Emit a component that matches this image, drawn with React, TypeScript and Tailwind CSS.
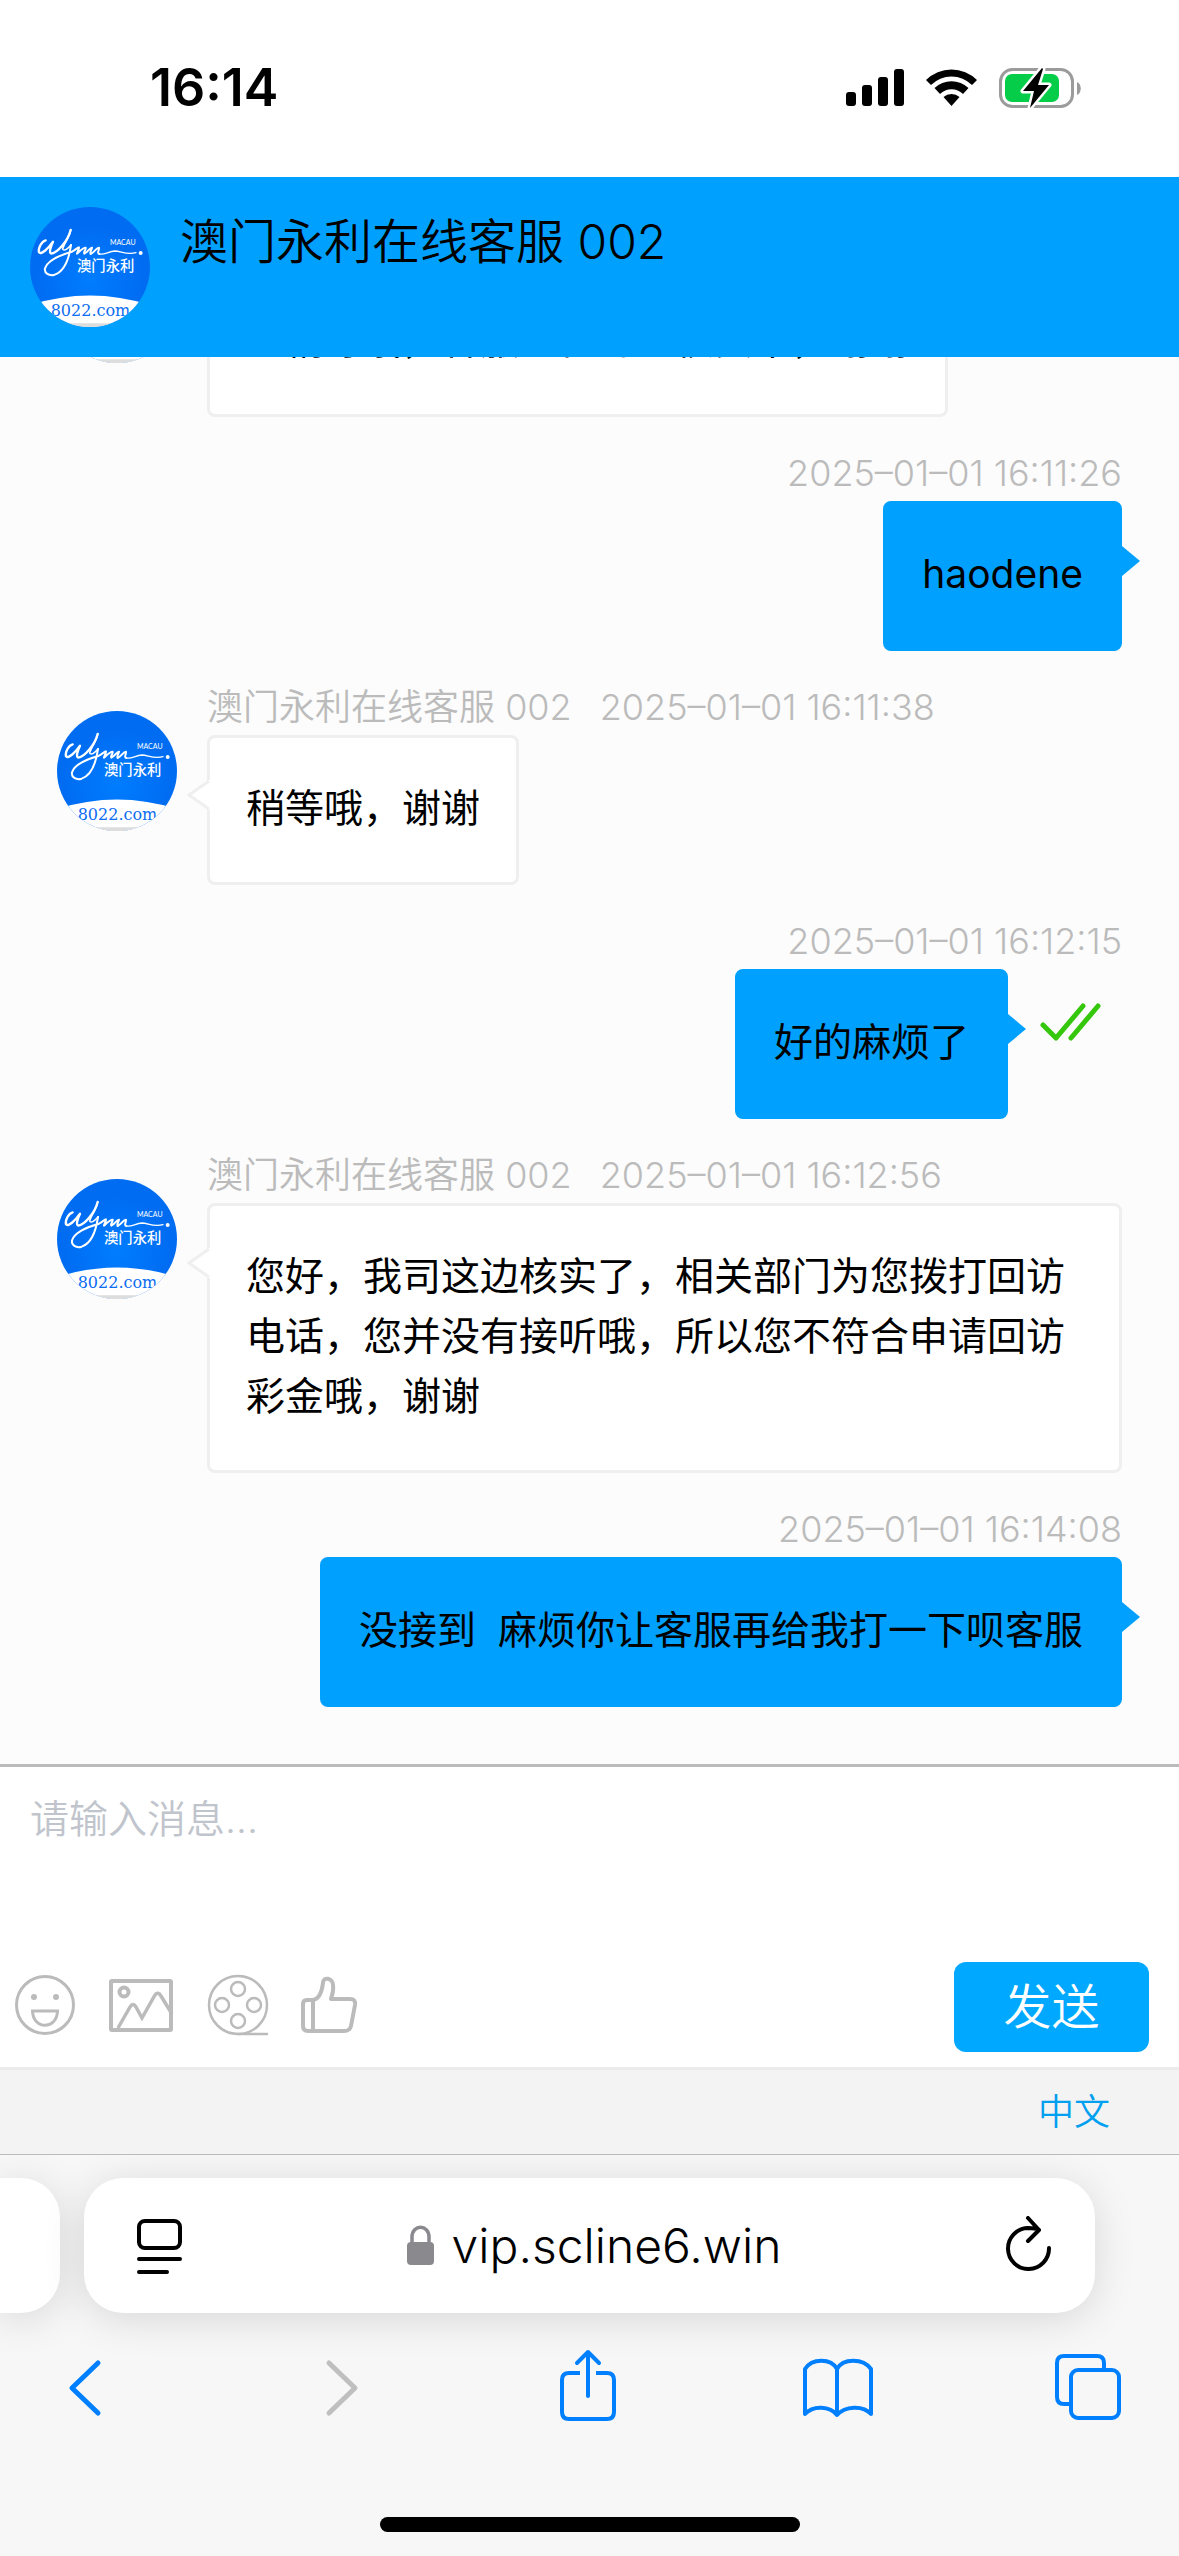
import { useState } from "react";

type Message = {
  id: number;
  from: "agent" | "me";
  text: string;
  time?: string;
  read?: boolean;
};

const AGENT = "澳门永利在线客服 002";

const messages: Message[] = [
  { id: 1, from: "agent", text: "您稍等哦，客服正在为您核实中，谢谢" },
  { id: 2, from: "me", text: "haodene", time: "2025–01–01 16:11:26" },
  { id: 3, from: "agent", text: "稍等哦，谢谢", time: "2025–01–01 16:11:38" },
  { id: 4, from: "me", text: "好的麻烦了", time: "2025–01–01 16:12:15", read: true },
  {
    id: 5,
    from: "agent",
    text: "您好，我司这边核实了，相关部门为您拨打回访电话，您并没有接听哦，所以您不符合申请回访彩金哦，谢谢",
    time: "2025–01–01 16:12:56",
  },
  { id: 6, from: "me", text: "没接到  麻烦你让客服再给我打一下呗客服", time: "2025–01–01 16:14:08" },
];

function Avatar({ id }: { id: string }) {
  return (
    <svg className="w-[120px] h-[120px] shrink-0" viewBox="90 81 360 360" role="img" aria-label="Wynn Macau">
      <defs>
        <radialGradient id={`${id}-bg`} cx="0.5" cy="0.6" r="0.45">
          <stop offset="0" stopColor="#007dff" />
          <stop offset="1" stopColor="#006cf2" />
        </radialGradient>
        <clipPath id={`${id}-clip`}>
          <circle cx="270" cy="261" r="180" />
        </clipPath>
      </defs>
      <g clipPath={`url(#${id}-clip)`}>
        <rect x="90" y="81" width="360" height="360" fill={`url(#${id}-bg)`} />
        <path d="M90 375 Q270 318 450 375 V441 H90 Z" fill="#fff" />
        <path d="M190 430 H350 V441 H190 Z" fill="#ddd" />
        <g fill="none" stroke="#fff" strokeLinecap="round" strokeLinejoin="round">
          <path
            strokeWidth="7"
            d="M137 181 C124 184 114 206 117 217 C124 226 146 204 159 185 C151 202 146 219 154 221 C172 219 203 184 212 150"
          />
          <path strokeWidth="5" d="M212 150 C210 172 190 192 188 207 C192 215 204 206 213 195" />
          <path
            strokeWidth="6"
            d="M213 195 C208 230 196 273 164 284 C147 289 132 279 135 265 C142 243 180 225 216 215 C228 209 234 201 237 202 C238 207 230 218 231 221 C240 213 252 201 257 203 C258 209 249 218 253 221 C263 217 270 202 276 203 C275 210 268 218 272 222 C283 217 290 202 297 203 C298 210 290 220 298 222"
          />
          <path strokeWidth="4" d="M298 222 C314 226 326 213 345 213 C364 214 380 225 408 218" />
        </g>
        <circle cx="422" cy="219" r="6" fill="#fff" />
        <text x="330" y="195" fontSize="21" fill="#fff" className="font-['Lato']">MACAU</text>
        <text x="231" y="272" fontSize="43" fill="#fff" className="font-['Noto_Sans_CJK_SC'] font-medium">澳门永利</text>
        <text x="152" y="409" fontSize="48" fill="#0c6cf2" className="font-['DejaVu_Serif']">8022.com</text>
      </g>
    </svg>
  );
}

function StatusBar() {
  return (
    <div className="h-[177px] shrink-0 flex items-start justify-between bg-white pl-[150px] pr-[98px] pt-[56px]">
      <span className="text-[52px] leading-[64px] font-semibold">16:14</span>
      <div className="flex items-center gap-[21px] h-[64px]">
        <svg className="w-[59px] h-[40px]" viewBox="0 0 59 40">
          <rect x="0" y="24" width="10" height="14" rx="3" />
          <rect x="16" y="17" width="10" height="21" rx="3" />
          <rect x="32" y="9" width="10" height="29" rx="3" />
          <rect x="48" y="1" width="10" height="37" rx="3" />
        </svg>
        <svg className="w-[51px] h-[40px]" viewBox="0 0 51 40">
          <path d="M0 12 A36 36 0 0 1 51 12 L46 17 A29 29 0 0 0 5 17 Z" />
          <path d="M8.500 20 A24.500 24.500 0 0 1 42.500 20 L37 26 A16.500 16.500 0 0 0 14 26 Z" />
          <path d="M17.500 29 A12 12 0 0 1 33.500 29 L25.500 38 Z" />
        </svg>
        <svg className="w-[83px] h-[42px]" viewBox="0 0 83 42">
          <rect x="2.500" y="2.500" width="72" height="37" rx="12" fill="none" stroke="#9b9b9b" strokeWidth="3" />
          <rect x="7" y="7" width="54" height="28" rx="7" fill="#05cd49" />
          <path d="M79 15 C84 17 84 26 79 28 Z" fill="#9b9b9b" />
          <path
            d="M44 1 L25 24 H36 L32 41 L51 18 H40 L45 2 Z"
            stroke="#fff"
            strokeWidth="5"
            strokeLinejoin="round"
            paintOrder="stroke"
          />
        </svg>
      </div>
    </div>
  );
}

function AgentMessage({ message }: { message: Message }) {
  return (
    <li className="flex items-start gap-[30px]">
      <div className="pt-8">
        <Avatar id={`avatar-${message.id}`} />
      </div>
      <div className="min-w-0">
        <p className="flex gap-7 h-[56px] text-[36px] leading-[56px] font-[350] text-[#bbb] whitespace-nowrap">
          {message.time && (
            <>
              <span>{AGENT}</span>
              <time>{message.time}</time>
            </>
          )}
        </p>
        <div className="relative w-fit rounded-lg border-3 border-[#efefef] bg-white px-9 pt-10 pb-11 text-[39px] leading-[60px]">
          <svg className="absolute -left-[23px] top-[42px] w-[24px] h-[30px]" viewBox="0 0 24 30">
            <path d="M24 0 H22 L2 15 L22 30 H24 Z" fill="#fff" />
            <path d="M22 1 L2 15 L22 29" fill="none" stroke="#efefef" strokeWidth="3" />
          </svg>
          {message.text}
        </div>
      </div>
    </li>
  );
}

function MyMessage({ message }: { message: Message }) {
  return (
    <li className="flex flex-col items-end">
      <time className="h-[56px] text-[36px] leading-[56px] font-[350] text-[#bbb]">{message.time}</time>
      <div className="flex items-start">
        <div className="relative rounded-lg border-3 border-[#00a0ff] bg-[#00a0ff] px-9 pt-10 pb-11 text-[39px] leading-[60px] whitespace-pre-wrap">
          {message.text}
          <svg className="absolute -right-[21px] top-[42px] w-[18px] h-[30px]" viewBox="0 0 18 30">
            <path d="M0 0 L18 15 L0 30 Z" fill="#00a0ff" />
          </svg>
        </div>
        {message.read && (
          <svg className="w-[114px] h-[110px]" viewBox="0 0 114 110" role="img" aria-label="已读">
            <path
              d="M35 56 L48 69 L75 37 M63 69 L90 37"
              fill="none"
              stroke="#35c70b"
              strokeWidth="5"
              strokeLinecap="round"
              strokeLinejoin="round"
            />
          </svg>
        )}
      </div>
    </li>
  );
}

function Composer() {
  const [draft, setDraft] = useState("");

  return (
    <form
      className="shrink-0 border-t-3 border-[#bbb] bg-white"
      onSubmit={(e) => {
        e.preventDefault();
        setDraft("");
      }}
    >
      <textarea
        aria-label="消息"
        className="block w-full h-[195px] resize-none px-[30px] pt-[22px] text-[39px] leading-[60px] font-[350] outline-none placeholder:text-[#c0c4cc]"
        placeholder="请输入消息..."
        value={draft}
        onChange={(e) => setDraft(e.target.value)}
      />
      <div className="flex items-center justify-between pl-[15px] pr-[30px] pb-[15px]">
        <div className="flex items-center gap-8 pb-1">
          <button type="button" aria-label="表情">
            <svg className="w-[62px] h-[62px]" viewBox="0 0 62 62" fill="none" stroke="#bbb" strokeWidth="3">
              <circle cx="30" cy="31" r="28.500" />
              <circle cx="19" cy="23" r="3" fill="#bbb" stroke="none" />
              <circle cx="41" cy="23" r="3" fill="#bbb" stroke="none" />
              <path d="M17.500 37 H42.500 C42 56 18 56 17.500 37 Z" />
            </svg>
          </button>
          <button type="button" aria-label="图片">
            <svg className="w-[66px] h-[62px]" viewBox="0 0 66 62" fill="none" stroke="#bbb" strokeWidth="4">
              <rect x="2" y="7" width="60" height="49" rx="1" />
              <circle cx="15" cy="18" r="4.500" />
              <path d="M9 54 L21 33 Q24 28 27 33 L33 44 L46 21 Q49 17 52 22 L63 40" strokeWidth="3.500" />
            </svg>
          </button>
          <button type="button" aria-label="视频">
            <svg className="w-[62px] h-[62px]" viewBox="0 0 62 62" fill="none" stroke="#bbb" strokeWidth="2.500">
              <circle cx="31" cy="31" r="29" />
              <circle cx="31" cy="15" r="7" />
              <circle cx="31" cy="47" r="7" />
              <circle cx="15" cy="31" r="7" />
              <circle cx="47" cy="31" r="7" />
              <path d="M31 60 H60" strokeLinecap="round" />
            </svg>
          </button>
          <button type="button" aria-label="评价">
            <svg className="w-[60px] h-[62px]" viewBox="2 0 60 62" fill="none" stroke="#bbb" strokeWidth="4" strokeLinejoin="round">
              <path d="M8 26 H14 C20 25 23 17 24 9 C24 2 34 4 34 11 C35 17 33 21 32 25 H51 Q57 25 56 31 L52 52 Q51 57 45 57 H9 Q4 57 4 52 V30 Q4 26 8 26 Z" />
              <path d="M14 26 V57" />
            </svg>
          </button>
        </div>
        <button type="submit" className="w-[195px] h-[90px] rounded-xl bg-[#00a8ff] text-[48px] leading-[90px] font-[350] text-white">
          发送
        </button>
      </div>
    </form>
  );
}

function BrowserBar() {
  return (
    <footer className="shrink-0 overflow-hidden border-t border-[#bbb] bg-[#f7f7f7] pt-[23px]">
      <div className="flex gap-6">
        <div className="w-[60px] h-[135px] shrink-0 rounded-r-[39px] bg-white shadow-[0_6px_42px_rgba(0,0,0,0.13)]" />
        <div className="flex flex-1 items-center justify-between h-[135px] mr-[84px] rounded-[39px] bg-white pl-[52px] pr-[42px] shadow-[0_6px_42px_rgba(0,0,0,0.13)]">
          <button aria-label="页面设置">
            <svg className="w-[48px] h-[60px]" viewBox="0 0 48 60" fill="none" stroke="#000" strokeWidth="4" strokeLinecap="round">
              <rect x="3" y="5" width="41" height="27" rx="6" />
              <path d="M3 43 H44 M3 56 H31" />
            </svg>
          </button>
          <div className="flex items-center gap-[17px]">
            <svg className="w-[29px] h-[42px]" viewBox="0 0 29 42">
              <path d="M6 20 V12 C6 -1 23 -1 23 12 V20" fill="none" stroke="#8a898e" strokeWidth="3.500" />
              <rect x="1" y="17" width="27" height="23" rx="4" fill="#8a898e" />
            </svg>
            <span className="text-[48px] leading-[60px] font-[350]">vip.scline6.win</span>
          </div>
          <button aria-label="刷新">
            <svg
              className="w-[50px] h-[60px]"
              viewBox="0 0 50 60"
              fill="none"
              stroke="#000"
              strokeWidth="4"
              strokeLinecap="round"
              strokeLinejoin="round"
            >
              <path d="M46 32 A20.500 20.500 0 1 1 25 12 C29 12 33 12 36 14 M25 2 L36 14 L25 25" />
            </svg>
          </button>
        </div>
      </div>
      <nav className="flex items-center justify-between pl-12 pr-[54px] pt-[34px] text-[#007fff]">
        <button aria-label="后退">
          <svg className="w-[72px] h-[80px]" viewBox="0 0 72 80" fill="none" stroke="currentColor" strokeWidth="5" strokeLinecap="round" strokeLinejoin="round">
            <path d="M50 16 L24 41 L50 66" />
          </svg>
        </button>
        <button aria-label="前进" disabled>
          <svg className="w-[72px] h-[80px]" viewBox="0 0 72 80" fill="none" stroke="#bfbfc0" strokeWidth="5" strokeLinecap="round" strokeLinejoin="round">
            <path d="M30 16 L56 41 L30 66" />
          </svg>
        </button>
        <button aria-label="分享">
          <svg className="w-[72px] h-[80px]" viewBox="0 0 72 80" fill="none" stroke="currentColor" strokeWidth="4" strokeLinecap="round" strokeLinejoin="round">
            <path d="M29 26 H18 Q11 26 11 33 V65 Q11 72 18 72 H56 Q63 72 63 65 V33 Q63 26 56 26 H45" strokeLinecap="butt" />
            <path d="M37 49 V5 M26 16 L37 5 L48 16" />
          </svg>
        </button>
        <button aria-label="书签">
          <svg className="w-[72px] h-[80px]" viewBox="0 0 72 80" fill="none" stroke="currentColor" strokeWidth="4" strokeLinecap="round" strokeLinejoin="round">
            <path d="M35 68 C28 59 11 58 3 67 V22 C10 11 29 11 35 22 C41 11 61 11 69 22 V67 C61 58 43 59 35 68 Z M35 22 V67" />
          </svg>
        </button>
        <button aria-label="标签页">
          <svg className="w-[72px] h-[80px]" viewBox="0 0 72 80" fill="none" stroke="currentColor" strokeWidth="4" strokeLinejoin="round">
            <path d="M16 57 H11 Q4 57 4 50 V16 Q4 9 11 9 H44 Q51 9 51 16 V22" />
            <rect x="18" y="23" width="48" height="48" rx="7" />
          </svg>
        </button>
      </nav>
      <div className="pt-[90px] pb-6 flex justify-center">
        <div className="w-[420px] h-[15px] rounded-full bg-black" />
      </div>
    </footer>
  );
}

export default function App() {
  return (
    <div className="flex flex-col h-screen overflow-hidden bg-white text-black font-['Inter','Noto_Sans_CJK_SC',sans-serif]">
      <StatusBar />

      <header className="shrink-0 flex items-start gap-[30px] bg-[#00a0ff] p-[30px]">
        <Avatar id="avatar-header" />
        <h1 className="text-[48px] leading-[70px] font-[350]">{AGENT}</h1>
      </header>

      <main className="flex-1 min-h-0 flex flex-col justify-end overflow-hidden bg-[#fcfcfc] px-[57px] pb-[57px]">
        <ul className="flex flex-col gap-7">
          {messages.map((message) =>
            message.from === "agent" ? (
              <AgentMessage key={message.id} message={message} />
            ) : (
              <MyMessage key={message.id} message={message} />
            )
          )}
        </ul>
      </main>

      <Composer />

      <div className="shrink-0 flex items-center justify-end border-t-3 border-[#ebebeb] bg-[#f3f3f3] h-[87px] pr-[69px]">
        <button className="text-[36px] leading-[54px] font-[350] text-[#00a0f0]">中文</button>
      </div>

      <BrowserBar />
    </div>
  );
}
